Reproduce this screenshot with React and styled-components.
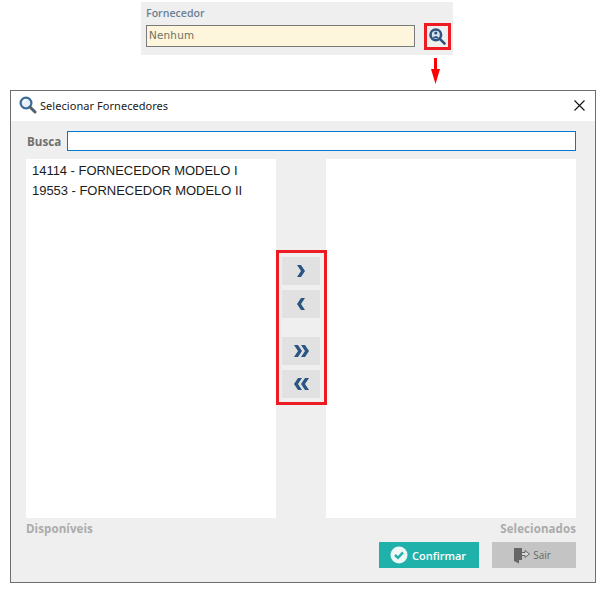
import React from 'react';
import styled, { createGlobalStyle } from 'styled-components';

const Global = createGlobalStyle`
  html, body { margin: 0; padding: 0; background: #fff; }
  body { font-family: 'Open Sans', 'Liberation Sans', sans-serif; }
  * { box-sizing: border-box; }
`;

const Page = styled.div`
  width: 611px;
  height: 589px;
  padding-top: 2px;
  overflow: hidden;
`;

const FieldPanel = styled.div`
  width: 312px;
  height: 53px;
  margin-left: 141px;
  padding: 4px 2px 0 5px;
  background: #efefef;
`;

const FieldLabel = styled.div`
  height: 17px;
  font-size: 10.6px;
  font-weight: 600;
  line-height: 14px;
  color: #6b7f95;
`;

const FieldRow = styled.div`
  display: flex;
  align-items: flex-start;
  justify-content: space-between;
`;

const FieldInput = styled.div`
  width: 269px;
  height: 22px;
  margin-top: 2px;
  padding-left: 2px;
  border: 1px solid #7a7a7a;
  background: #fdf6dc;
  font-family: 'DejaVu Sans', sans-serif;
  font-size: 10.4px;
  line-height: 18px;
  letter-spacing: 0.2px;
  color: #6f6f62;
`;

const Highlight = styled.div`
  border: 3px solid #ed1c24;
`;

const LookupBox = styled(Highlight)`
  display: flex;
  align-items: center;
  justify-content: center;
  width: 27px;
  height: 27px;
`;

const ArrowWrap = styled.div`
  height: 35px;
  margin-left: 431px;
  padding-top: 3px;
  svg { display: block; }
`;

const Dialog = styled.div`
  width: 586px;
  height: 493px;
  margin-left: 10px;
  border: 1px solid #6d6d6d;
  background: #efefef;
`;

const TitleBar = styled.div`
  display: flex;
  align-items: center;
  height: 30px;
  padding: 0 10px 2px 8px;
  background: #fff;
`;

const Title = styled.span`
  flex: 1;
  margin-left: 3px;
  font-family: 'Noto Sans', sans-serif;
  font-size: 11px;
  letter-spacing: 0.05px;
  color: #1a1a1a;
`;

const Body = styled.div`
  padding: 10px 19px 0 15px;
`;

const SearchRow = styled.div`
  display: flex;
  align-items: center;
  height: 20px;
`;

const SearchLabel = styled.span`
  width: 41px;
  padding-left: 1px;
  font-family: 'Open Sans', sans-serif;
  font-size: 11.6px;
  font-weight: 700;
  color: #6f6f6f;
`;

const SearchInput = styled.div`
  flex: 1;
  height: 20px;
  border: 1px solid #0078d4;
  background: #fff;
`;

const Columns = styled.div`
  display: grid;
  grid-template-columns: 250px 50px 250px;
  height: 359px;
  margin-top: 8px;
`;

const List = styled.div`
  padding: 1px 6px;
  background: #fff;
`;

const ListItem = styled.div`
  height: 20px;
  font-family: 'Liberation Sans', sans-serif;
  font-size: 13px;
  line-height: 21px;
  letter-spacing: -0.03px;
  color: #1c1c1c;
`;

const Middle = styled.div`
  padding-top: 91px;
`;

const MoveBox = styled(Highlight)`
  position: relative;
  z-index: 1;
  display: flex;
  flex-direction: column;
  gap: 5px;
  width: 51px;
  height: 155px;
  padding: 4px 4px 0 3px;
`;

const MoveGroup = styled.div`
  display: flex;
  flex-direction: column;
  gap: 5px;
  margin-top: ${props => props.$offset || 0}px;
`;

const MoveButton = styled.div`
  display: flex;
  align-items: center;
  justify-content: center;
  width: 38px;
  height: 28px;
  background: #e1e1e1;
`;

const Captions = styled.div`
  display: flex;
  justify-content: space-between;
  height: 22px;
  padding-top: 3px;
`;

const Caption = styled.span`
  font-family: 'Open Sans', sans-serif;
  font-size: 11.5px;
  font-weight: 700;
  line-height: 15px;
  letter-spacing: 0.1px;
  color: #ababab;
`;

const Actions = styled.div`
  display: flex;
  justify-content: flex-end;
  gap: 13px;
  margin-top: 2px;
`;

const ActionButton = styled.div`
  display: flex;
  align-items: center;
  justify-content: center;
  gap: ${props => props.$primary ? 4 : 2}px;
  width: ${props => props.$primary ? 100 : 84}px;
  height: 26px;
  padding-right: ${props => props.$primary ? 2 : 4}px;
  background: ${props => props.$primary ? '#20b2aa' : '#c4c4c4'};
  color: ${props => props.$primary ? '#fff' : '#666'};
  font-family: 'Open Sans', sans-serif;
  font-size: ${props => props.$primary ? 11 : 10}px;
  font-weight: ${props => props.$primary ? 600 : 400};
`;

const Lookup = () => (
  <svg width="17" height="17" viewBox="0 0 17 17">
    <circle cx="6.8" cy="6.8" r="5.3" fill="#dbe4ee" stroke="#2f5480" strokeWidth="2.6" />
    <circle cx="6.8" cy="5" r="1.6" fill="#2f5480" />
    <path d="M3.9 10 C4.2 7.6 9.4 7.6 9.7 10 Z" fill="#2f5480" />
    <path d="M10.8 10.8 L15.5 15.5" stroke="#2f5480" strokeWidth="2.6" strokeLinecap="round" />
  </svg>
);

const TitleIcon = () => (
  <svg width="18" height="18" viewBox="0 0 18 18">
    <circle cx="7" cy="7" r="5.4" fill="#e6eff7" stroke="#3a6a98" strokeWidth="2.2" />
    <path d="M4.2 6.5 A3.2 3.2 0 0 1 7.5 3.6" fill="none" stroke="#fff" strokeWidth="1.2" />
    <path d="M11 11 L16 16" stroke="#4d5f70" strokeWidth="3" strokeLinecap="round" />
  </svg>
);

const Close = () => (
  <svg width="11" height="11" viewBox="0 0 11 11">
    <path d="M0.5 0.5 L10.5 10.5 M10.5 0.5 L0.5 10.5" stroke="#111" strokeWidth="1.1" />
  </svg>
);

const chevrons = {
  right: 'M0 0 L4 0 L8 6 L4 12 L0 12 L4 6 Z',
  left: 'M8 0 L4 0 L0 6 L4 12 L8 12 L4 6 Z',
};

const Chevron = ({ dir }) => (
  <svg width="8" height="12" viewBox="0 0 8 12">
    <path d={chevrons[dir]} fill="#2b5582" />
  </svg>
);

const DoubleChevron = ({ dir }) => (
  <svg width="15" height="12" viewBox="0 0 15 12">
    <path d={chevrons[dir]} fill="#2b5582" />
    <path d={chevrons[dir]} fill="#2b5582" transform="translate(7 0)" />
  </svg>
);

const CheckIcon = () => (
  <svg width="18" height="18" viewBox="0 0 18 18">
    <circle cx="9" cy="9" r="8.5" fill="#eef8f7" />
    <path d="M5 9 L8 11.8 L13 6.4" fill="none" stroke="#20b2aa" strokeWidth="2.4" />
  </svg>
);

const ExitIcon = () => (
  <svg width="18" height="17" viewBox="0 0 18 17">
    <path d="M1 1 L9 1 L9 13 L6 13 L6 16.5 L1 14 Z" fill="#666" />
    <path d="M9 5.5 L12 5.5 L12 3.5 L16.5 7 L12 10.5 L12 8.5 L9 8.5" fill="#d8d8d8" stroke="#666" strokeWidth="1" />
  </svg>
);

export default function App() {
  return (
    <Page>
      <Global />
      <FieldPanel>
        <FieldLabel>Fornecedor</FieldLabel>
        <FieldRow>
          <FieldInput>Nenhum</FieldInput>
          <LookupBox><Lookup /></LookupBox>
        </FieldRow>
      </FieldPanel>
      <ArrowWrap>
        <svg width="9" height="26" viewBox="0 0 9 26">
          <path d="M3 0 H6 V11 H9 L4.5 26 L0 11 H3 Z" fill="#f00" />
        </svg>
      </ArrowWrap>
      <Dialog>
        <TitleBar>
          <TitleIcon />
          <Title>Selecionar Fornecedores</Title>
          <Close />
        </TitleBar>
        <Body>
          <SearchRow>
            <SearchLabel>Busca</SearchLabel>
            <SearchInput />
          </SearchRow>
          <Columns>
            <List>
              <ListItem>14114 - FORNECEDOR MODELO I</ListItem>
              <ListItem>19553 - FORNECEDOR MODELO II</ListItem>
            </List>
            <Middle>
              <MoveBox>
                <MoveGroup>
                  <MoveButton><Chevron dir="right" /></MoveButton>
                  <MoveButton><Chevron dir="left" /></MoveButton>
                </MoveGroup>
                <MoveGroup $offset={14}>
                  <MoveButton><DoubleChevron dir="right" /></MoveButton>
                  <MoveButton><DoubleChevron dir="left" /></MoveButton>
                </MoveGroup>
              </MoveBox>
            </Middle>
            <List />
          </Columns>
          <Captions>
            <Caption>Disponíveis</Caption>
            <Caption>Selecionados</Caption>
          </Captions>
          <Actions>
            <ActionButton $primary><CheckIcon />Confirmar</ActionButton>
            <ActionButton><ExitIcon />Sair</ActionButton>
          </Actions>
        </Body>
      </Dialog>
    </Page>
  );
}
